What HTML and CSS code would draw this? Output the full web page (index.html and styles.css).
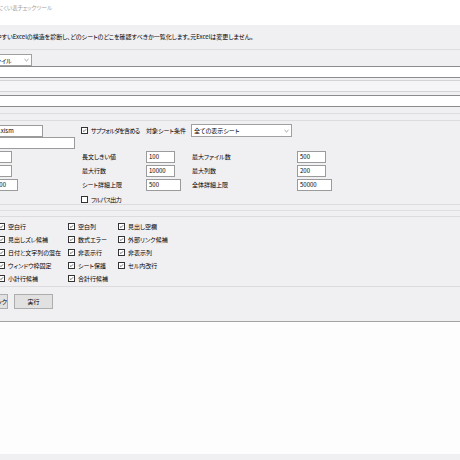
FILE: index.html
```html
<!DOCTYPE html>
<html lang="ja">
  <head>
    <meta charset="UTF-8" />
    <meta name="viewport" content="width=device-width, initial-scale=1.0" />
    <title>見にくい表チェックツール</title>
    <link rel="stylesheet" href="styles.css">
  </head>
  <body>
    <div class="window">
      <div class="titlebar">
        <span class="title">見にくい表チェックツール</span>
      </div>

      <main class="panel">
        <p class="desc">
          崩れやすいExcelの構造を診断し、どのシートのどこを確認すべきか一覧化します。元Excelは変更しません。
        </p>
        <div class="rule rule-top"></div>

        <div class="combo combo-mode">
          <span>ファイル</span>
          <svg class="chevron" viewBox="0 0 6 4"><path d="M0.6 0.8 L3 3.1 L5.4 0.8" /></svg>
        </div>
        <div class="textbox wide"></div>
        <div class="readonly wide"></div>
        <div class="textbox wide"></div>

        <div class="rule rule-mid"></div>

        <!-- 走査設定 -->
        <section class="group settings">
          <div class="row row-first">
            <div class="textbox ext">.xlsm</div>
            <label class="check tight">
              <span class="box checked"><svg viewBox="0 0 7 7"><path d="M1.3 3.5 L2.8 5 L5.7 1.8" /></svg></span>
              サブフォルダを含める
            </label>
            <span class="label">対象シート条件</span>
            <div class="combo combo-sheet">
              <span>全ての表示シート</span>
              <svg class="chevron" viewBox="0 0 6 4"><path d="M0.6 0.8 L3 3.1 L5.4 0.8" /></svg>
            </div>
          </div>

          <div class="row row-second">
            <div class="textbox folder"></div>
          </div>

          <div class="row">
            <div class="textbox num">30</div>
            <span class="label">長文しきい値</span>
            <div class="textbox num">100</div>
            <span class="label">最大ファイル数</span>
            <div class="textbox num">500</div>
          </div>
          <div class="row">
            <div class="textbox num">20</div>
            <span class="label">最大行数</span>
            <div class="textbox num">10000</div>
            <span class="label">最大列数</span>
            <div class="textbox num">200</div>
          </div>
          <div class="row">
            <div class="textbox num num-wide">100000</div>
            <span class="label">シート詳細上限</span>
            <div class="textbox num num-wide">500</div>
            <span class="label">全体詳細上限</span>
            <div class="textbox num num-wide">50000</div>
          </div>

          <div class="row row-last">
            <span></span>
            <label class="check tight">
              <span class="box"></span>
              フルパス出力
            </label>
          </div>
        </section>

        <div class="rule rule-low"></div>

        <!-- チェック項目 -->
        <section class="group checks">
          <div class="check-grid" id="check-grid"></div>
        </section>

        <div class="actions">
          <button class="btn">すべてチェック</button>
          <button class="btn">実行</button>
        </div>
      </main>

      <div class="log"></div>
      <div class="statusbar"></div>
    </div>

    <script>
      const items = [
        "空白行", "空白列", "見出し空欄",
        "見出しズレ候補", "数式エラー", "外部リンク候補",
        "日付と文字列の混在", "非表示行", "非表示列",
        "ウィンドウ枠固定", "シート保護", "セル内改行",
        "小計行候補", "合計行候補"
      ];

      const grid = document.getElementById("check-grid");
      items.forEach((name) => {
        const item = document.createElement("label");
        item.className = "check";
        item.innerHTML = `
          <span class="box checked"><svg viewBox="0 0 7 7"><path d="M1.3 3.5 L2.8 5 L5.7 1.8" /></svg></span>
          ${name}
        `;
        grid.appendChild(item);
      });
    </script>
  </body>
</html>
```

FILE: styles.css
```css
* {
  margin: 0;
  padding: 0;
  box-sizing: border-box;
}

body {
  font-family: "Noto Sans CJK JP", "Noto Sans", sans-serif;
  font-size: 6px;
  font-feature-settings: "palt";
  color: #000000;
  background: #ffffff;
  overflow: hidden;
}

.window {
  width: 460px;
  height: 460px;
  display: flex;
  flex-direction: column;
  overflow: hidden;
}

.titlebar {
  height: 25px;
  background: #ffffff;
  padding-top: 4px;
  line-height: 8px;
  white-space: nowrap;
}

.title {
  display: inline-block;
  margin-left: -7.5px;
  font-size: 5.5px;
  color: #9a9a9a;
}

.panel {
  background: #f0eff2;
  border-bottom: 1px solid #a3a3a3;
  padding: 6px 0 12px;
  display: flex;
  flex-direction: column;
}

.desc {
  height: 12px;
  line-height: 12px;
  margin-left: -16px;
  white-space: nowrap;
}

.rule {
  height: 1px;
  background: #dedde0;
}

.rule-top {
  margin-top: 6px;
}

.rule-mid {
  margin-top: 6px;
}

.rule-low {
  margin-top: 5px;
}

/* Inputs */
.textbox {
  height: 12px;
  background: #ffffff;
  border: 1px solid #9b9b9b;
  padding: 0 2px;
  line-height: 10px;
  white-space: nowrap;
  overflow: hidden;
}

.wide {
  margin-left: -20px;
  width: 500px;
}

.panel > .textbox.wide {
  border-color: #8c8c8c;
}

.readonly {
  height: 12px;
  margin: 2px 0 3px -20px;
  background: #f5f4f6;
  border: 1px solid #d3d2d5;
}

.combo {
  height: 12px;
  background: #ffffff;
  border: 1px solid #a0a0a0;
  padding: 0 2px;
  display: flex;
  align-items: center;
  justify-content: space-between;
  white-space: nowrap;
}

.combo-mode {
  margin-top: 4px;
  margin-left: -12px;
  width: 44px;
}

.combo-sheet {
  width: 101px;
  margin-left: -1px;
  height: 13px;
}

.chevron {
  width: 5px;
  height: 4px;
  flex-shrink: 0;
}

.chevron path {
  fill: none;
  stroke: #5a5a5a;
  stroke-width: 0.7;
}

/* Group boxes */
.group {
  border-top: 1px solid #dcdbde;
  border-bottom: 1px solid #dcdbde;
}

.settings {
  margin-top: 6px;
  padding: 3px 0 0;
}

.row {
  display: grid;
  grid-template-columns: 99px 64px 46px 105px 1fr;
  align-items: center;
  height: 12px;
  margin-left: -17px;
  margin-top: 2px;
  white-space: nowrap;
}

.row-first {
  margin-top: 0;
}

.row-second {
  margin-top: 1px;
}

.row-last {
  height: 10px;
  margin-top: 3px;
}

.ext {
  width: 47px;
  margin-left: 13px;
}

.folder {
  width: 92px;
}

.num {
  width: 29px;
}

.num-wide {
  width: 35px;
}

.label {
  line-height: 12px;
}

.check {
  display: flex;
  align-items: center;
  gap: 3px;
  white-space: nowrap;
}

.settings .check {
  margin-left: -1px;
}

.tight {
  letter-spacing: -0.6px;
}

.box {
  width: 7px;
  height: 7px;
  border: 1px solid #333333;
  background: #ffffff;
  display: inline-flex;
  flex-shrink: 0;
}

.box svg {
  width: 5px;
  height: 5px;
}

.box path {
  fill: none;
  stroke: #222222;
  stroke-width: 0.9;
}

.checks {
  margin-top: 5px;
  padding: 3px 0 1px;
}

.check-grid {
  display: grid;
  grid-template-columns: 70px 50px 1fr;
  grid-auto-rows: 13px;
  align-items: center;
  margin-left: -2px;
}

/* Buttons */
.actions {
  display: flex;
  gap: 6px;
  margin-top: 7px;
  margin-left: -31px;
}

.btn {
  width: 39px;
  height: 15px;
  background: #e1e1e1;
  border: 1px solid #adadad;
  font-family: inherit;
  font-size: 6px;
  font-feature-settings: "palt";
  color: #000000;
  white-space: nowrap;
}

.log {
  flex: 1;
  background: #fdfdfd;
}

.statusbar {
  height: 6px;
  background: #f0eff2;
}
```
